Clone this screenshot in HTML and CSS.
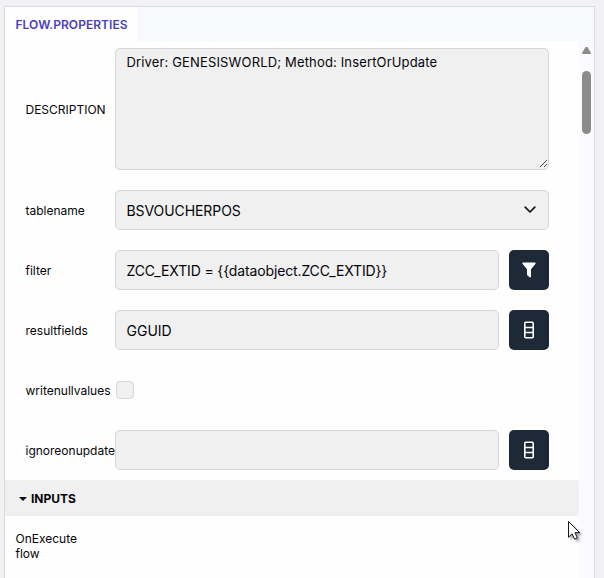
FILE: index.html
```
<!DOCTYPE html>
<html lang="en">
<head>
<meta charset="utf-8">
<title>Flow properties</title>
<link rel="stylesheet" href="styles.css">
</head>
<body>
<main class="panel">
  <header class="tabs"><div class="tab">FLOW.PROPERTIES</div></header>
  <div class="body">
    <div class="content">
      <form class="form">
        <div class="row row-tall">
          <label class="label">DESCRIPTION</label>
          <div class="field area">Driver: GENESISWORLD; Method: InsertOrUpdate
            <svg class="grip" width="9" height="9" viewBox="0 0 9 9"><path d="M1 8L8 1M5 8L8 5"/></svg>
          </div>
        </div>
        <div class="row">
          <label class="label">tablename</label>
          <div class="field select"><span>BSVOUCHERPOS</span>
            <svg width="12" height="8" viewBox="0 0 12 8"><path d="M1.2 1.2L6 6L10.8 1.2"/></svg>
          </div>
        </div>
        <div class="row">
          <label class="label">filter</label>
          <div class="field expression">ZCC_EXTID = {{dataobject.ZCC_EXTID}}</div>
          <button class="button" type="button" aria-label="Filter">
            <svg width="14" height="16" viewBox="0 0 14 16"><path class="solid" d="M.9.5H13.1Q14 .7 13.5 1.7L9 7.3V14.6Q8.8 15.8 7.7 15.2L5.5 13.5Q5 13.1 5 12.5V7.3L.5 1.7Q0 .7.9.5Z"/></svg>
          </button>
        </div>
        <div class="row">
          <label class="label">resultfields</label>
          <div class="field">GGUID</div>
          <button class="button" type="button" aria-label="Fields">
            <svg width="10" height="18" viewBox="0 0 10 18"><rect x=".8" y="1.3" width="8.4" height="15.4" rx="1"/><path d="M1 6.5H9M1 11.5H9"/></svg>
          </button>
        </div>
        <div class="row">
          <label class="label">writenullvalues</label>
          <div class="checkbox"></div>
        </div>
        <div class="row">
          <label class="label">ignoreonupdate</label>
          <div class="field"></div>
          <button class="button" type="button" aria-label="Fields">
            <svg width="10" height="18" viewBox="0 0 10 18"><rect x=".8" y="1.3" width="8.4" height="15.4" rx="1"/><path d="M1 6.5H9M1 11.5H9"/></svg>
          </button>
        </div>
      </form>
      <h2 class="section"><span class="caret"></span>INPUTS</h2>
      <p class="input-name">OnExecute flow</p>
    </div>
    <div class="scrollbar"><div class="arrow"></div><div class="thumb"></div></div>
  </div>
</main>
<svg class="cursor" width="18" height="24" viewBox="0 0 18 24"><path d="M1.5 1.5V17.2L5.1 13.8L7.6 19.2L10.4 18L8 12.7H12.7Z"/></svg>
</body>
</html>
```
FILE: styles.css
```
* { box-sizing: border-box; }
body {
  margin: 0;
  height: 578px;
  overflow: hidden;
  padding: 6px 9px 0 4px;
  background: #f2f2f5;
  color: #050508;
  font: 13px/15px Inter, sans-serif;
}
.panel {
  height: 572px;
  display: flex;
  flex-direction: column;
  border: 1px solid #d9dae0;
  border-bottom: 0;
  background: #fefefe;
}
.tabs { flex: none; display: flex; height: 34px; background: #f8f9fd; }
.tab {
  width: 132px;
  padding: 10px 0 0 10.5px;
  background: #fefefe;
  color: #4b40bb;
  font-size: 12px;
  font-weight: 600;
  letter-spacing: .05px;
}
.body { flex: 1; display: flex; min-height: 0; }
.content { width: 574px; }
.form {
  display: flex;
  flex-direction: column;
  gap: 20px;
  padding: 7px 30px 10px 20px;
}
.row { display: flex; align-items: center; height: 40px; }
.row-tall { height: 122px; }
.label { flex: none; width: 90px; padding-left: .5px; font-size: 12px; white-space: nowrap; }
.field {
  flex: 1;
  height: 100%;
  padding: 0 10.5px;
  border: 1px solid #d5d6db;
  border-radius: 5px;
  background: #f0f0f1;
  font-size: 14px;
  line-height: 40px;
}
.expression { letter-spacing: -.14px; }
.area { position: relative; padding-top: 5px; font-size: 13px; line-height: 16px; letter-spacing: .15px; }
.grip { position: absolute; right: 0; bottom: 1px; fill: none; stroke: #44444a; stroke-width: 1; }
.select { display: flex; justify-content: space-between; align-items: center; padding-right: 12px; letter-spacing: -.08px; }
.select span { padding-top: 1px; }
.select svg { fill: none; stroke: #15151a; stroke-width: 1.7; stroke-linecap: round; stroke-linejoin: round; }
.button {
  display: flex;
  align-items: center;
  justify-content: center;
  width: 40px;
  height: 40px;
  margin-left: 10px;
  padding: 0;
  border: 0;
  border-radius: 5px;
  background: #1e2937;
}
.button svg { fill: none; stroke: #fff; stroke-width: 1.6; }
.button .solid { fill: #fff; stroke: none; }
.checkbox {
  width: 18px;
  height: 18px;
  margin-left: 1px;
  border: 1px solid #d5d6db;
  border-radius: 4px;
  background: #f0f0f1;
}
.section {
  display: flex;
  align-items: center;
  gap: 4px;
  height: 36px;
  margin: 0;
  padding: 1px 0 0 14px;
  border-radius: 0 3px 3px 0;
  background: #f0f0f1;
  font-size: 12px;
  font-weight: 700;
}
.caret { border: 4px solid transparent; border-top-color: #0b0b10; border-bottom: 0; }
.input-name { width: 80px; margin: 15px 0 0 10.5px; font-size: 12px; }
.scrollbar {
  flex: 1;
  display: flex;
  flex-direction: column;
  align-items: center;
  padding-top: 6px;
  background: #fbfbfd;
}
.arrow { width: 9px; height: 7px; background: #8b8b8c; clip-path: polygon(40% 0, 60% 0, 100% 85%, 95% 100%, 5% 100%, 0 85%); }
.thumb { width: 9px; height: 63px; margin-top: 17px; border-radius: 5px; background: #8b8b8c; }
.cursor {
  position: absolute;
  left: 567px;
  top: 520px;
  fill: #fff;
  stroke: #16161a;
  stroke-width: 1;
  filter: drop-shadow(2px 2px 1px rgba(0, 0, 0, .35));
}
```
